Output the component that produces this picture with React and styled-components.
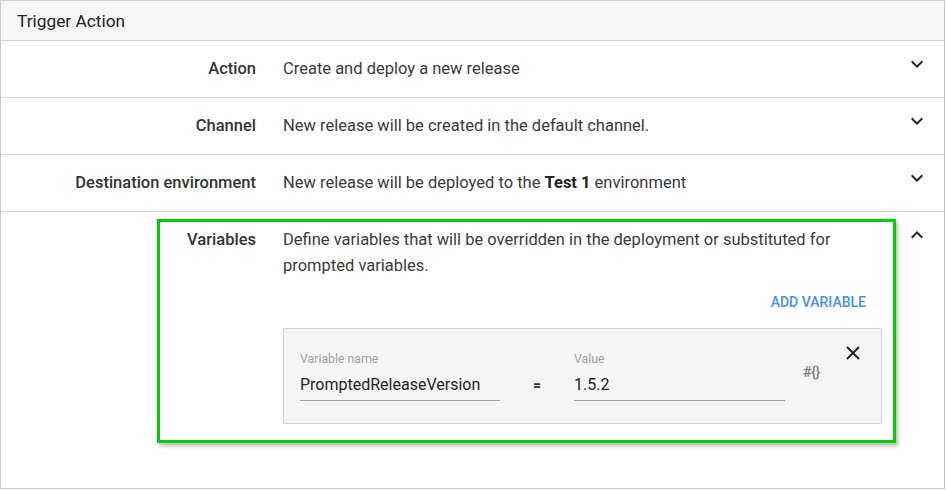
import React from 'react';
import styled, { createGlobalStyle } from 'styled-components';

const GlobalStyle = createGlobalStyle`
  body {
    margin: 0;
    background: #fff;
    font-family: Roboto, "Noto Sans", "Liberation Sans", sans-serif;
    color: #333;
  }
`;

const Panel = styled.div`
  width: 945px;
  height: 489px;
  box-sizing: border-box;
  border: 1px solid #ccc;
  border-right-color: #c4c4c4;
  display: flex;
  flex-direction: column;
`;

const Header = styled.div`
  height: 39px;
  display: flex;
  align-items: center;
  padding-left: 16px;
  background: #f7f7f7;
  border-bottom: 1px solid #d0d0d0;
  font-size: 17.3px;
  color: #222;
`;

const Row = styled.div`
  position: relative;
  display: flex;
  align-items: flex-start;
  padding: 15px 0 15px;
  border-bottom: ${(p) => (p.$last ? 'none' : '1px solid #d6d6d6')};
  font-size: 16.5px;
  line-height: 26px;
`;

const Label = styled.div`
  width: 255px;
  flex: none;
  text-align: right;
  font-weight: 500;
  color: #333;
`;

const Value = styled.div`
  width: 599px;
  flex: none;
  margin-left: 27px;
  color: #3a3a3a;

  b {
    font-weight: 700;
    color: #222;
  }
`;

const Toggle = styled.div`
  flex: 1;
  display: flex;
  justify-content: flex-end;
  padding-right: 15px;
  margin-top: -4px;
  height: 24px;
  color: #222;
`;

const Actions = styled.div`
  display: flex;
  justify-content: flex-end;
  margin-top: 5px;
`;

const TextButton = styled.button`
  height: 36px;
  padding: 0 16px;
  border: none;
  background: transparent;
  font-family: inherit;
  font-size: 14px;
  font-weight: 500;
  color: #4a90e2;
  text-transform: uppercase;
  cursor: pointer;
`;

const VariableCard = styled.div`
  margin-top: 8px;
  box-sizing: border-box;
  height: 96px;
  display: flex;
  align-items: flex-start;
  padding: 22px 16px 0 16px;
  background: #f5f5f5;
  border: 1px solid #cfcfcf;
  border-radius: 2px;
  line-height: normal;
`;

const Field = styled.div`
  width: ${(p) => p.$width}px;
  flex: none;
  display: flex;
  flex-direction: column;
`;

const FieldLabel = styled.span`
  font-size: 12.3px;
  line-height: 16px;
  color: #9e9e9e;
`;

const FieldInput = styled.div`
  padding: 6px 0 3px;
  font-size: 16px;
  line-height: 24px;
  color: #222;
  border-bottom: 1px solid #9e9e9e;
`;

const Equals = styled.div`
  width: 74px;
  flex: none;
  text-align: center;
  margin-top: 26px;
  font-size: 14px;
  font-weight: 700;
  color: #333;
`;

const Hash = styled.div`
  margin-left: 18px;
  margin-top: 13px;
  font-size: 14px;
  font-weight: 500;
  color: #7a7a7a;
  letter-spacing: -0.3px;
`;

const CloseButton = styled.button`
  margin-left: auto;
  margin-top: -10px;
  width: 24px;
  height: 24px;
  padding: 0;
  border: none;
  background: transparent;
  display: flex;
  align-items: center;
  justify-content: center;
  color: #222;
  cursor: pointer;
`;

const Highlight = styled.div`
  position: absolute;
  left: 156px;
  top: 7px;
  width: 739px;
  height: 224px;
  box-sizing: border-box;
  border: 3px solid #0c0;
  box-shadow: 2px 3px 4px rgba(0, 0, 0, 0.28);
  pointer-events: none;
`;

const Chevron = ({ up }) => (
  <svg width="24" height="24" viewBox="0 0 24 24" fill="currentColor">
    {up ? (
      <path d="M12 8l-6 6 1.41 1.41L12 10.83l4.59 4.58L18 14z" />
    ) : (
      <path d="M16.59 8.59L12 13.17 7.41 8.59 6 10l6 6 6-6z" />
    )}
  </svg>
);

const CloseIcon = () => (
  <svg width="14" height="14" viewBox="0 0 14 14" stroke="currentColor" strokeWidth="2" fill="none">
    <path d="M1 1l12 12M13 1L1 13" />
  </svg>
);

const rows = [
  { label: 'Action', value: 'Create and deploy a new release' },
  { label: 'Channel', value: 'New release will be created in the default channel.' },
  {
    label: 'Destination environment',
    value: (
      <>
        New release will be deployed to the <b>Test 1</b> environment
      </>
    ),
  },
];

export default function App() {
  return (
    <>
      <GlobalStyle />
      <Panel>
        <Header>Trigger Action</Header>
        {rows.map((r) => (
          <Row key={r.label}>
            <Label>{r.label}</Label>
            <Value>{r.value}</Value>
            <Toggle>
              <Chevron />
            </Toggle>
          </Row>
        ))}
        <Row $last>
          <Label>Variables</Label>
          <Value>
            Define variables that will be overridden in the deployment or substituted for prompted variables.
            <Actions>
              <TextButton>Add variable</TextButton>
            </Actions>
            <VariableCard>
              <Field $width={200}>
                <FieldLabel>Variable name</FieldLabel>
                <FieldInput>PromptedReleaseVersion</FieldInput>
              </Field>
              <Equals>=</Equals>
              <Field $width={211}>
                <FieldLabel>Value</FieldLabel>
                <FieldInput>1.5.2</FieldInput>
              </Field>
              <Hash>#{'{}'}</Hash>
              <CloseButton>
                <CloseIcon />
              </CloseButton>
            </VariableCard>
          </Value>
          <Toggle>
            <Chevron up />
          </Toggle>
          <Highlight />
        </Row>
      </Panel>
    </>
  );
}
